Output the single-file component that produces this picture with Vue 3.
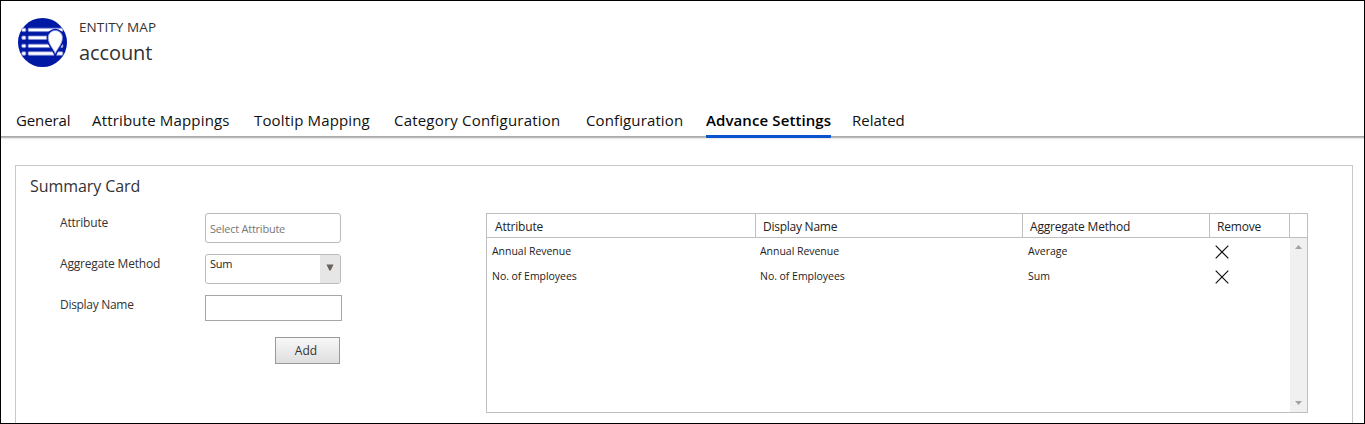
<script setup>
import { ref } from 'vue'

const tabs = [
  { label: 'General', key: 'general' },
  { label: 'Attribute Mappings', key: 'attributes' },
  { label: 'Tooltip Mapping', key: 'tooltip' },
  { label: 'Category Configuration', key: 'category' },
  { label: 'Configuration', key: 'configuration' },
  { label: 'Advance Settings', key: 'advance' },
  { label: 'Related', key: 'related' },
]
const bars = [10.2, 18, 26.2, 33.8]
const active = ref('advance')
const displayName = ref('')
const rows = ref([
  { attribute: 'Annual Revenue', name: 'Annual Revenue', method: 'Average' },
  { attribute: 'No. of Employees', name: 'No. of Employees', method: 'Sum' },
])
</script>

<template>
  <div class="window">
    <header class="header">
      <svg class="logo" viewBox="0 0 49 49">
        <circle cx="24.5" cy="24.500" r="24.500" fill="#0019a5" />
        <g v-for="y in bars" :key="y" fill="#fff" stroke="#7f8bd8" stroke-width="0.800">
          <rect x="3.800" :y="y" width="4" height="3.400" rx="1" />
          <rect x="10.200" :y="y" width="34.600" height="3.400" rx="0.800" />
        </g>
        <path d="M37.300 35.500C35.500 30.500 30.200 26.500 30.200 19.500a7.100 7 0 0 1 14.200 0c0 7-5.300 11-7.100 16z" fill="none" stroke="#0019a5" stroke-width="3.400" />
        <path d="M37.300 35.500C35.500 30.500 30.200 26.500 30.200 19.500a7.100 7 0 0 1 14.200 0c0 7-5.300 11-7.100 16z" fill="#fff" stroke="#8f9adf" stroke-width="0.800" />
      </svg>
      <div class="titles">
        <div class="kind">ENTITY MAP</div>
        <div class="record">account</div>
      </div>
    </header>

    <nav class="tabs">
      <a v-for="t in tabs" :key="t.key" class="tab" :class="[t.key, { active: active === t.key }]" @click="active = t.key">{{ t.label }}</a>
    </nav>

    <section class="panel">
      <h2 class="panel-title">Summary Card</h2>
      <div class="content">
        <form class="form" @submit.prevent>
          <label class="label attr">Attribute</label>
          <div class="picker">Select Attribute</div>
          <label class="label method">Aggregate Method</label>
          <div class="select">
            <span class="select-value">Sum</span>
            <span class="select-arrow"><svg viewBox="0 0 8 7"><path d="M0.500 0.500h7L4.700 6.500H3.300z" fill="#6b625c" /></svg></span>
          </div>
          <label class="label display">Display Name</label>
          <input v-model="displayName" class="input" type="text" />
          <button class="add" type="button">Add</button>
        </form>

        <div class="grid">
          <div class="row head">
            <span class="h-attr">Attribute</span>
            <span class="h-name">Display Name</span>
            <span class="h-method">Aggregate Method</span>
            <span class="h-remove">Remove</span>
            <span></span>
          </div>
          <div class="body">
            <div class="lines">
              <div v-for="(r, i) in rows" :key="i" class="row line">
                <span>{{ r.attribute }}</span>
                <span class="name">{{ r.name }}</span>
                <span>{{ r.method }}</span>
                <span class="remove"><svg viewBox="0 0 14 14"><path d="M0.700 0.700l12.600 12.600M13.300 0.700L0.700 13.300" stroke="#111" stroke-width="1.200" /></svg></span>
              </div>
            </div>
            <div class="scroll">
              <svg viewBox="0 0 7 4"><path d="M3.500 0L7 4H0z" fill="#a3a3a3" /></svg>
              <svg viewBox="0 0 7 4"><path d="M0 0h7L3.500 4z" fill="#a3a3a3" /></svg>
            </div>
          </div>
        </div>
      </div>
    </section>
  </div>
</template>

<style>
html, body { background: #fff; overflow: hidden; }
</style>

<style scoped>
* { box-sizing: border-box; }
.window {
  width: 1365px; height: 424px; border: 1px solid #000; overflow: hidden;
  display: flex; flex-direction: column; background: #fff; color: #333;
  font-family: "Open Sans", "Noto Sans", sans-serif; white-space: nowrap;
}
.header { display: flex; height: 105px; flex: none; padding: 17px 0 0 17px; }
.logo { width: 49px; height: 49px; flex: none; }
.titles { padding-left: 12px; }
.kind { font-size: 13.500px; line-height: 18px; letter-spacing: 0.1px; }
.record { font-size: 20px; line-height: 28px; margin-top: 3px; letter-spacing: -0.1px; }

.tabs {
  display: flex; height: 31px; flex: none; padding-left: 15px; color: #111;
  border-bottom: 1px solid #aaa; box-shadow: 0 1px 1px #bbb, 0 2px 2px #eee;
}
.tab { font-size: 15px; line-height: 28px; height: 31px; flex: none; }
.general { width: 76px; letter-spacing: -0.12px; }
.attributes { width: 162px; letter-spacing: 0.17px; }
.tooltip { width: 140px; letter-spacing: 0.15px; }
.category { width: 192px; letter-spacing: 0.2px; }
.configuration { width: 120px; letter-spacing: 0.12px; }
.advance { width: 125px; margin-right: 21px; }
.active { font-weight: 600; color: #000; border-bottom: 3px solid #0b53ce; border-radius: 1px; height: 32px; letter-spacing: 0.1px; }

.panel { width: 1338px; height: 290px; flex: none; margin: 28px 0 0 14px; border: 1px solid #c8c8c8; }
.panel-title { margin: 0; padding-left: 14px; font-size: 16px; font-weight: 400; line-height: 24px; height: 47px; padding-top: 8px; letter-spacing: -0.08px; }
.content { display: flex; align-items: flex-start; }
.form {
  width: 326px; margin-left: 44px; display: grid; flex: none;
  grid-template-columns: 145px 137px; grid-template-rows: 41px 41px 42px 27px; align-items: start;
}
.label { font-size: 12px; line-height: 20px; letter-spacing: -0.2px; }
.display { letter-spacing: -0.3px; }
.picker, .select { width: 136px; height: 30px; border: 1px solid #bbb; border-radius: 3px; font-size: 11px; }
.picker { padding-left: 4px; line-height: 30px; color: #777; letter-spacing: -0.24px; }
.select { display: flex; overflow: hidden; }
.select-value { flex: 1; padding-left: 4px; line-height: 18px; color: #222; letter-spacing: -0.3px; }
.select-arrow { width: 20px; background: #e6e6e6; }
.select-arrow svg { display: block; width: 8px; height: 7px; margin: 9px 0 0 6px; }
.input { width: 137px; height: 26px; border: 1px solid #a6a6a6; padding: 0 4px; outline: none; background: #fff; }
.add {
  grid-column: 2; justify-self: end; width: 65px; height: 27px; margin-right: 2px; padding: 0 3px 0 0;
  border: 1px solid #999; background: linear-gradient(#f8f8f8, #dedede); color: #333;
  font-family: inherit; font-size: 12px;
}
.grid { width: 822px; height: 200px; margin-left: 100px; border: 1px solid #bfbfbf; display: flex; flex-direction: column; }
.row { display: grid; grid-template-columns: 269px 267px 187px 80px 1fr; }
.head { height: 24px; flex: none; border-bottom: 1px solid #bfbfbf; font-size: 12px; line-height: 26px; letter-spacing: -0.2px; color: #222; }
.head span { height: 23px; padding-left: 7px; border-right: 1px solid #bfbfbf; }
.head .h-attr { padding-left: 8px; }
.head .h-name { letter-spacing: -0.25px; }
.head span:last-child { border-right: 0; }
.body { display: flex; flex: 1; }
.lines { flex: 1; padding-top: 1px; }
.line { height: 25px; font-size: 10.500px; line-height: 25px; color: #222; }
.line span { padding-left: 5px; letter-spacing: -0.03px; }
.line .name { padding-left: 4px; }
.line .remove { padding-left: 5px; }
.remove svg { display: block; width: 14px; height: 14px; margin-top: 6px; }
.scroll { width: 17px; background: #f0f0f0; display: flex; flex-direction: column; justify-content: space-between; align-items: center; padding: 7px 0; }
.scroll svg { width: 7px; height: 4px; }
</style>
